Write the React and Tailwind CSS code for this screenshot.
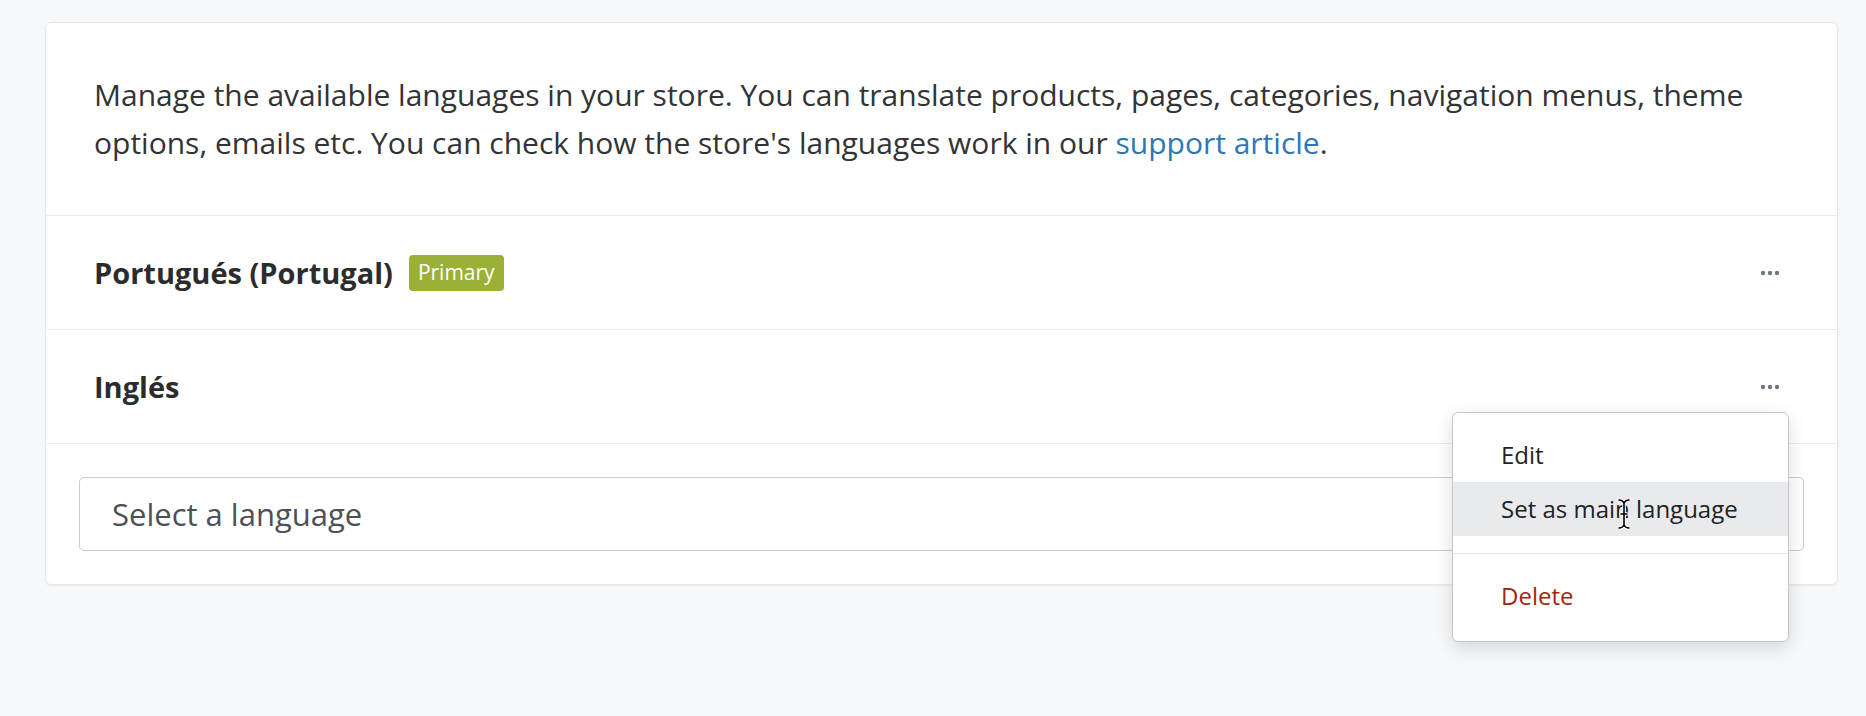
import React from 'react'

const font = { fontFamily: '"Open Sans", Lato, sans-serif' }

const Dots = () => (
  <svg width="20" height="6" viewBox="0 0 20 6" className="text-[#6f7680]">
    <circle cx="3" cy="3" r="2.2" fill="currentColor" />
    <circle cx="10" cy="3" r="2.2" fill="currentColor" />
    <circle cx="17" cy="3" r="2.2" fill="currentColor" />
  </svg>
)

const IBeam = () => (
  <svg width="14" height="32" viewBox="0 0 14 32" className="absolute left-[164px] top-[85px]">
    <path
      d="M2 2 C5 2 6 3 7 5 C8 3 9 2 12 2 M7 5 L7 27 M4 16 L10 16 M2 30 C5 30 6 29 7 27 C8 29 9 30 12 30"
      fill="none"
      stroke="#fff"
      strokeWidth="3.5"
      strokeLinecap="round"
    />
    <path
      d="M2 2 C5 2 6 3 7 5 C8 3 9 2 12 2 M7 5 L7 27 M4 16 L10 16 M2 30 C5 30 6 29 7 27 C8 29 9 30 12 30"
      fill="none"
      stroke="#000"
      strokeWidth="1.6"
      strokeLinecap="round"
    />
  </svg>
)

const LanguageRow = ({ name, primary }) => (
  <div className="flex items-center justify-between pl-[48px] pr-[53px] h-[114px] border-b border-[#ebecee]">
    <div className="flex items-center gap-[16px]">
      <h3 className="text-[29px] font-bold text-[#2c2c2c]">{name}</h3>
      {primary && (
        <span className="h-[36px] px-[9px] flex items-center rounded-[4px] bg-[#9bb036] text-white text-[21px]">
          Primary
        </span>
      )}
    </div>
    <button className="p-1">
      <Dots />
    </button>
  </div>
)

const App = () => {
  return (
    <div className="min-h-[716px] bg-[#f7f8fa] pt-[22px] pl-[45px] pr-[28px]" style={font}>
      <div className="relative bg-white border border-[#e6e7e9] rounded-[6px] shadow-[0_1px_2px_rgba(0,0,0,0.06)]">
        <div className="px-[48px] py-[48px] border-b border-[#ebecee]">
          <p className="text-[30px] leading-[48px] text-[#333]">
            Manage the available languages in your store. You can translate products, pages, categories, navigation menus, theme
            options, emails etc. You can check how the store's languages work in our{' '}
            <a href="#" className="text-[#2c78b5]">support article</a>.
          </p>
        </div>

        <LanguageRow name="Portugués (Portugal)" primary />
        <LanguageRow name="Inglés" />

        <div className="p-[33px]">
          <div className="h-[74px] flex items-center px-[32px] border border-[#c9cdd3] rounded-[5px] text-[31px] text-[#4d5056]">
            Select a language
          </div>
        </div>

        {/* dropdown menu for the second language */}
        <div className="absolute right-[48px] top-[389px] w-[337px] bg-white border border-[#c6c7c9] rounded-[6px] shadow-[0_6px_18px_rgba(0,0,0,0.14)] pt-[15px] pb-[18px]">
          <div className="h-[54px] flex items-center pl-[48px] text-[24px] text-[#222]">Edit</div>
          <div className="h-[54px] flex items-center pl-[48px] text-[24px] text-[#222] bg-[#e9eaed]">Set as main language</div>
          <div className="mt-[17px] border-t border-[#e6e7ea] pt-[15px]">
            <div className="h-[54px] flex items-center pl-[48px] text-[24px] text-[#a6230f]">Delete</div>
          </div>
          <IBeam />
        </div>
      </div>
    </div>
  )
}

export default App
